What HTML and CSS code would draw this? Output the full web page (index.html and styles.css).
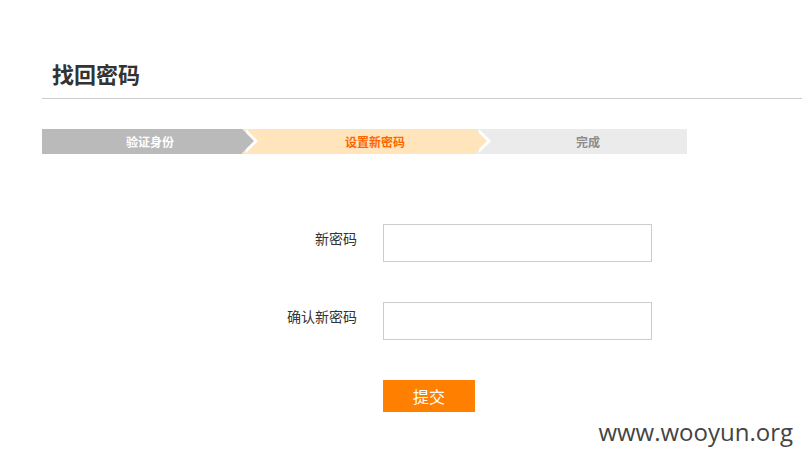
FILE: index.html
```html
<!DOCTYPE html>
<html lang="zh-CN">
<head>
  <meta charset="UTF-8" />
  <title>找回密码</title>
  <link rel="stylesheet" href="styles.css">
</head>
<body>
  <div class="page">
    <div class="header">
      <h1>找回密码</h1>
    </div>

    <div class="steps">
      <div class="step step-done">验证身份</div>
      <div class="step step-current">设置新密码</div>
      <div class="step step-next">完成</div>
    </div>

    <form class="reset-form">
      <label for="pwd">新密码</label>
      <input type="password" id="pwd" />

      <label for="pwd2">确认新密码</label>
      <input type="password" id="pwd2" />

      <span></span>
      <button type="submit">提交</button>
    </form>
  </div>

  <div class="watermark">www.wooyun.org</div>
</body>
</html>
```

FILE: styles.css
```css
body {
  margin: 0;
  font-family: "Noto Sans CJK SC", "Liberation Sans", sans-serif;
  background: #fff;
  color: #333;
  min-height: 463px;
  position: relative;
}

.page {
  margin-left: 42px;
  padding-top: 58px;
}

.header {
  border-bottom: 1px solid #ccc;
  padding: 0 0 10px 10px;
}

.header h1 {
  margin: 0;
  font-size: 22px;
  line-height: 30px;
  font-weight: bold;
  color: #333;
}

.steps {
  display: flex;
  width: 645px;
  margin-top: 30px;
  height: 25px;
}

.step {
  position: relative;
  height: 25px;
  line-height: 25px;
  font-size: 12px;
  font-weight: bold;
  text-align: center;
  box-sizing: border-box;
}

.step-done {
  width: 200px;
  padding-left: 16px;
  background: #bababa;
  color: #fff;
  z-index: 3;
}

.step-current {
  width: 233px;
  padding-left: 33px;
  background: #ffe4bc;
  color: #ff6600;
  z-index: 2;
}

.step-next {
  flex: 1;
  padding-left: 14px;
  background: #ebebeb;
  color: #8c8c8c;
  z-index: 1;
}

/* arrow with a white edge */
.step-done::before,
.step-current::before,
.step-done::after,
.step-current::after {
  content: "";
  position: absolute;
  top: 0;
  width: 0;
  height: 0;
  border-top: 12.5px solid transparent;
  border-bottom: 12.5px solid transparent;
  border-left: 12px solid #fff;
}

.step-done::before,
.step-current::before {
  right: -16px;
}

.step-done::after,
.step-current::after {
  right: -12px;
}

.step-done::after {
  border-left-color: #bababa;
}

.step-current::after {
  border-left-color: #ffe4bc;
}

.reset-form {
  display: grid;
  grid-template-columns: 315px 269px;
  column-gap: 26px;
  row-gap: 40px;
  margin-top: 70px;
}

.reset-form label {
  text-align: right;
  font-size: 14px;
  line-height: 18px;
  padding-top: 5px;
  color: #333;
}

.reset-form input {
  height: 38px;
  box-sizing: border-box;
  border: 1px solid #ccc;
  padding: 0 8px;
  font-size: 14px;
}

.reset-form button {
  width: 92px;
  height: 32px;
  background: #ff7f00;
  border: none;
  color: #fff;
  font-size: 16px;
  font-family: "Noto Sans CJK SC", sans-serif;
  cursor: pointer;
}

.watermark {
  position: absolute;
  right: 9px;
  top: 415px;
  font-family: "Open Sans", sans-serif;
  font-size: 24px;
  color: #444;
}
```
